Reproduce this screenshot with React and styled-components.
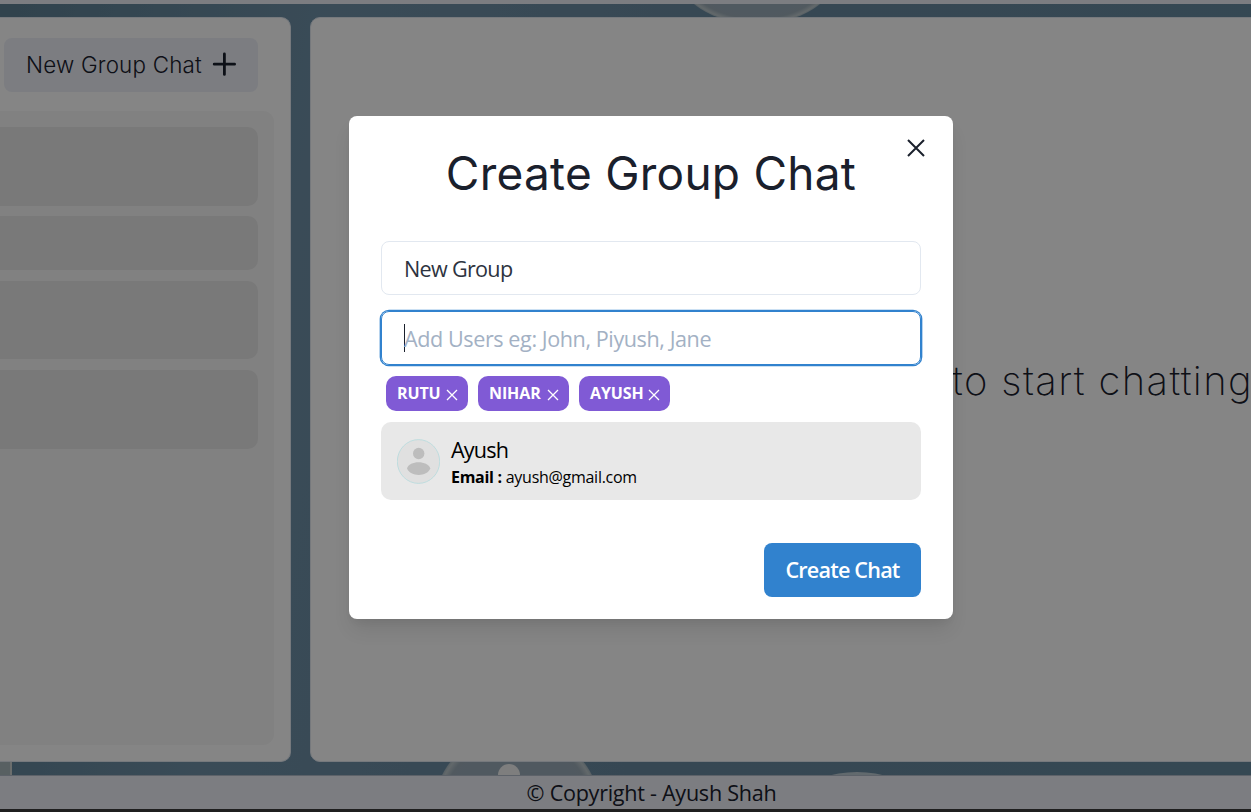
import React from "react";
import styled, { createGlobalStyle } from "styled-components";

const ui = '"Open Sans", "Noto Sans", sans-serif';
const display = 'Inter, "Liberation Sans", sans-serif';

const GlobalStyle = createGlobalStyle`
  *, *::before, *::after { box-sizing: border-box; }
  body { margin: 0; overflow: hidden; background: #1f1f1f; font-family: ${ui}; font-size: 21.6px; color: #1a202c; }
  button, input { font: inherit; color: inherit; margin: 0; }
`;

const Page = styled.div`
  position: relative;
  display: flex;
  flex-direction: column;
  width: 1251px;
  height: 809px;
  overflow: hidden;
`;

const TopBar = styled.header`
  flex: none;
  height: 4px;
  background: #edf0f7;
`;

const Workspace = styled.main`
  position: relative;
  display: flex;
  gap: 19px;
  height: 771px;
  padding: 13px 0;
  background: linear-gradient(100deg, #5e8094 0%, #6f91a8 24%, #6989a0 55%, #668a9f 100%);
`;

const Backdrop = styled.svg`
  position: absolute;
  inset: 0;
`;

const Panel = styled.section`
  position: relative;
  flex: none;
  background: #fff;
  border: 1px solid #e2e8f0;
  border-radius: 10px;
`;

const ChatsPanel = styled(Panel)`
  display: flex;
  flex-direction: column;
  gap: 19px;
  width: 291px;
  padding: 20px 16px 16px 0;
  border-left: 0;
  border-radius: 0 10px 10px 0;
`;

const NewChatButton = styled.button`
  display: flex;
  align-items: center;
  justify-content: space-between;
  width: 254px;
  height: 54px;
  margin-left: 4px;
  padding: 0 22px 2px 22px;
  border: 0;
  border-radius: 8px;
  background: #edf0f8;
  font-family: ${display};
  font-size: 22.4px;
  font-weight: 350;
  letter-spacing: 0.2px;
  white-space: nowrap;
`;

const ChatList = styled.div`
  flex: 1;
  padding: 16px 16px 16px 0;
  background: #f8f8f8;
  border-radius: 0 11px 11px 0;
`;

const ChatRow = styled.div`
  height: ${(p) => p.$height}px;
  margin-bottom: ${(p) => p.$gap}px;
  border-radius: 0 10px 10px 0;
  background: #e8e8e8;
`;

const MessagePanel = styled(Panel)`
  display: flex;
  align-items: center;
  justify-content: flex-end;
  width: 961px;
  padding: 0 17px 18px 0;
`;

const EmptyText = styled.p`
  margin: 0;
  font-family: ${display};
  font-size: 40px;
  font-weight: 200;
  letter-spacing: 1.35px;
  white-space: nowrap;
`;

const Footer = styled.footer`
  display: flex;
  justify-content: center;
  align-items: center;
  height: 34px;
  padding-left: 52px;
  background: #edf0f7;
  border-top: 1px solid #b3bdca;
  letter-spacing: -0.28px;
  line-height: 32px;
`;

const Overlay = styled.div`
  position: absolute;
  inset: 0;
  display: flex;
  align-items: flex-start;
  padding: 116px 0 0 349px;
  background: rgba(0, 0, 0, 0.48);
`;

const Dialog = styled.div`
  position: relative;
  display: flex;
  flex-direction: column;
  width: 604px;
  height: 503px;
  padding: 27px 32px 22px;
  border-radius: 8px;
  background: #fff;
  box-shadow: 0 13px 20px -4px rgba(0, 0, 0, 0.1), 0 5px 8px -3px rgba(0, 0, 0, 0.05);
`;

const Close = styled.button`
  position: absolute;
  top: 23px;
  right: 28px;
  display: flex;
  padding: 0;
  border: 0;
  background: none;
`;

const Title = styled.h1`
  margin: 0 0 38px;
  height: 60px;
  font-family: ${display};
  font-size: 46px;
  font-weight: 400;
  line-height: 60px;
  letter-spacing: 0.25px;
  text-align: center;
  white-space: nowrap;
`;

const Field = styled.div`
  flex: none;
  display: flex;
  align-items: center;
  height: 54px;
  margin-bottom: ${(p) => (p.$focused ? 11 : 16)}px;
  padding: 0 22px;
  border: 1px solid ${(p) => (p.$focused ? "#3182ce" : "#e2e8f0")};
  border-radius: 8px;
  box-shadow: ${(p) => (p.$focused ? "0 0 0 1.35px #3182ce" : "none")};
`;

const Value = styled.span`
  color: #2d3340;
  letter-spacing: -0.7px;
`;

const Placeholder = styled.span`
  color: #a3b1c4;
  letter-spacing: -0.42px;
`;

const Caret = styled.span`
  width: 1px;
  height: 28px;
  margin-right: -1px;
  background: #1a202c;
`;

const Badges = styled.div`
  display: flex;
  gap: 10px;
  padding-left: 5px;
  margin-bottom: 11px;
`;

const Badge = styled.span`
  display: flex;
  align-items: center;
  justify-content: space-between;
  width: ${(p) => p.$width}px;
  height: 35px;
  padding: 0 10px 1px 11px;
  border-radius: 10px;
  background: #805ad5;
  color: #fff;
  font-size: 16px;
  font-weight: 700;
  letter-spacing: -0.1px;

  svg { margin-top: 4px; }
`;

const UserCard = styled.div`
  display: flex;
  align-items: center;
  gap: 11px;
  height: 78px;
  padding: 0 16px;
  border-radius: 10px;
  background: #e8e8e8;
  color: #000;
`;

const UserInfo = styled.div`
  display: flex;
  flex-direction: column;
`;

const UserName = styled.span`
  height: 30px;
  line-height: 31px;
  letter-spacing: -0.8px;
`;

const UserEmail = styled.span`
  height: 24px;
  font-size: 16px;
  line-height: 26px;
  letter-spacing: -0.28px;
`;

const CreateButton = styled.button`
  align-self: flex-end;
  width: 157px;
  height: 54px;
  margin-top: auto;
  padding: 0 0 2px;
  border: 0;
  border-radius: 8px;
  background: #3182ce;
  color: #fff;
  font-weight: 600;
  letter-spacing: -0.8px;
`;

const PlusIcon = () => (
  <svg width="24" height="24" viewBox="0 0 24 24" fill="none" stroke="#1a202c" strokeWidth="2.8" strokeLinecap="round">
    <path d="M12.4 2v20.4M2.2 12.2h20.4" />
  </svg>
);

const CrossIcon = ({ size, width }) => (
  <svg width={size} height={size} viewBox={`0 0 ${size} ${size}`} fill="none" stroke="currentColor" strokeWidth={width}>
    <path d={`M1 1L${size - 1} ${size - 1}M${size - 1} 1L1 ${size - 1}`} />
  </svg>
);

const Avatar = () => (
  <svg width="43" height="45" viewBox="0 0 43 45">
    <ellipse cx="21.5" cy="22.5" rx="21.2" ry="21.9" fill="#e0e0e0" stroke="#b5dadd" strokeWidth="0.8" />
    <circle cx="21.7" cy="14.5" r="5.7" fill="#bdbdbd" />
    <path d="M10 29.5C12 21.2 31 21.2 33.3 29.5C30 38 13.5 38 10 29.5Z" fill="#bdbdbd" />
  </svg>
);

const Bubbles = () => (
  <Backdrop width="1251" height="771" viewBox="0 4 1251 771">
    <defs>
      <radialGradient id="bubble">
        <stop offset="0.78" stopColor="#9aabb9" />
        <stop offset="0.9" stopColor="#9babb7" />
        <stop offset="0.97" stopColor="#bdc8cc" />
        <stop offset="1" stopColor="#a5b6bf" />
      </radialGradient>
    </defs>
    <ellipse cx="757" cy="-28" rx="80" ry="52" fill="url(#bubble)" />
    <circle cx="517" cy="813" r="84" fill="url(#bubble)" />
    <circle cx="509" cy="775" r="11" fill="#f1f1f1" />
    <ellipse cx="857" cy="792" rx="48" ry="20" fill="#bdcbd3" />
    <rect x="0" y="760" width="12" height="16" fill="#a9b9bd" />
    <rect x="10" y="760" width="2" height="16" fill="#ced3d1" />
  </Backdrop>
);

const rows = [[79, 10], [54, 11], [78, 11], [79, 0]];
const members = [["RUTU", 82], ["NIHAR", 91], ["AYUSH", 91]];

export default function App() {
  return (
    <>
      <GlobalStyle />
      <Page>
        <TopBar />
        <Workspace>
          <Bubbles />
          <ChatsPanel>
            <NewChatButton>
              New Group Chat
              <PlusIcon />
            </NewChatButton>
            <ChatList>
              {rows.map(([height, gap], i) => <ChatRow key={i} $height={height} $gap={gap} />)}
            </ChatList>
          </ChatsPanel>
          <MessagePanel>
            <EmptyText>Click on a user to start chatting</EmptyText>
          </MessagePanel>
        </Workspace>
        <Footer>© Copyright - Ayush Shah</Footer>
        <Overlay>
          <Dialog role="dialog">
            <Close aria-label="Close"><CrossIcon size={18} width={2} /></Close>
            <Title>Create Group Chat</Title>
            <Field><Value>New Group</Value></Field>
            <Field $focused>
              <Caret />
              <Placeholder>Add Users eg: John, Piyush, Jane</Placeholder>
            </Field>
            <Badges>
              {members.map(([name, width]) => (
                <Badge key={name} $width={width}>{name}<CrossIcon size={12} width={1.3} /></Badge>
              ))}
            </Badges>
            <UserCard>
              <Avatar />
              <UserInfo>
                <UserName>Ayush</UserName>
                <UserEmail><b>Email :</b> ayush@gmail.com</UserEmail>
              </UserInfo>
            </UserCard>
            <CreateButton>Create Chat</CreateButton>
          </Dialog>
        </Overlay>
      </Page>
    </>
  );
}
